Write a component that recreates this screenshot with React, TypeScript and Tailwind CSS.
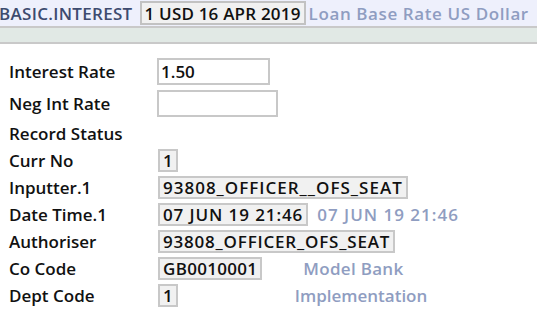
const font = { fontFamily: '"Open Sans", "DejaVu Sans", sans-serif' };

type Row = {
  label: string;
  h: string;
  kind?: 'input' | 'box';
  value?: string;
  width?: string;
  track?: string;
  note?: string;
  noteClass?: string;
};

const rows: Row[] = [
  { label: 'Interest Rate', h: 'h-[32px]', kind: 'input', value: '1.50', width: 'w-[113px]' },
  { label: 'Neg Int Rate', h: 'h-[32px]', kind: 'input', value: '', width: 'w-[121px]' },
  { label: 'Record Status', h: 'h-[28px]' },
  { label: 'Curr No', h: 'h-[27px]', kind: 'box', value: '1' },
  { label: 'Inputter.1', h: 'h-[27px]', kind: 'box', value: '93808_OFFICER__OFS_SEAT', track: 'tracking-[1px]' },
  { label: 'Date Time.1', h: 'h-[27px]', kind: 'box', value: '07 JUN 19 21:46', track: 'tracking-[0.9px]', note: '07 JUN 19 21:46', noteClass: 'ml-[9px] tracking-[1px]' },
  { label: 'Authoriser', h: 'h-[27px]', kind: 'box', value: '93808_OFFICER_OFS_SEAT', track: 'tracking-[0.8px]' },
  { label: 'Co Code', h: 'h-[27px]', kind: 'box', value: 'GB0010001', track: 'tracking-[0.3px]', note: 'Model Bank', noteClass: 'ml-[41px] tracking-[0.3px]' },
  { label: 'Dept Code', h: 'h-[27px]', kind: 'box', value: '1', note: 'Implementation', noteClass: 'ml-[117px]' },
  { label: 'Audit Date Time', h: 'h-[27px]' },
];

export default function App() {
  return (
    <div className="w-[537px] h-[316px] overflow-hidden bg-white text-[17px] font-semibold leading-none" style={font}>
      {/* Title bar */}
      <div className="flex items-center h-[28px] bg-[#eef0fc] border-b-2 border-[#c9c9c9] whitespace-nowrap">
        <span className="text-[#3d4b6f] -ml-[1px] tracking-[0.3px]">BASIC.INTEREST</span>
        <span className="ml-[7px] h-[24px] px-[3px] flex items-center bg-[#f1f1f1] border-2 border-[#c2c2c2] text-[#111] tracking-[0.2px]">
          1 USD 16 APR 2019
        </span>
        <span className="ml-[3px] text-[#8f9dc1] tracking-[0.6px]">Loan Base Rate US Dollar</span>
      </div>
      <div className="h-[16px] bg-[#e1e9e5] border-b-2 border-[#c9c9c9]" />

      {/* Fields */}
      <div className="pt-[11px]">
        {rows.map((r) => (
          <div key={r.label} className={`flex items-center ${r.h} whitespace-nowrap`}>
            <div className="w-[157px] pl-[9px] text-[#111]">{r.label}</div>
            {r.kind === 'input' && (
              <div className={`${r.width} h-[27px] px-[2px] flex items-center bg-white border-2 border-[#c8c8c8] text-[#111]`}>
                {r.value}
              </div>
            )}
            {r.kind === 'box' && (
              <div className={`ml-[1px] h-[23px] px-[3px] flex items-center bg-[#f1f1f1] border-2 border-[#c8c8c8] text-[#111] ${r.track ?? ''}`}>
                {r.value}
              </div>
            )}
            {r.note && <span className={`${r.noteClass} text-[#8f9dc1]`}>{r.note}</span>}
          </div>
        ))}
      </div>
    </div>
  );
}
